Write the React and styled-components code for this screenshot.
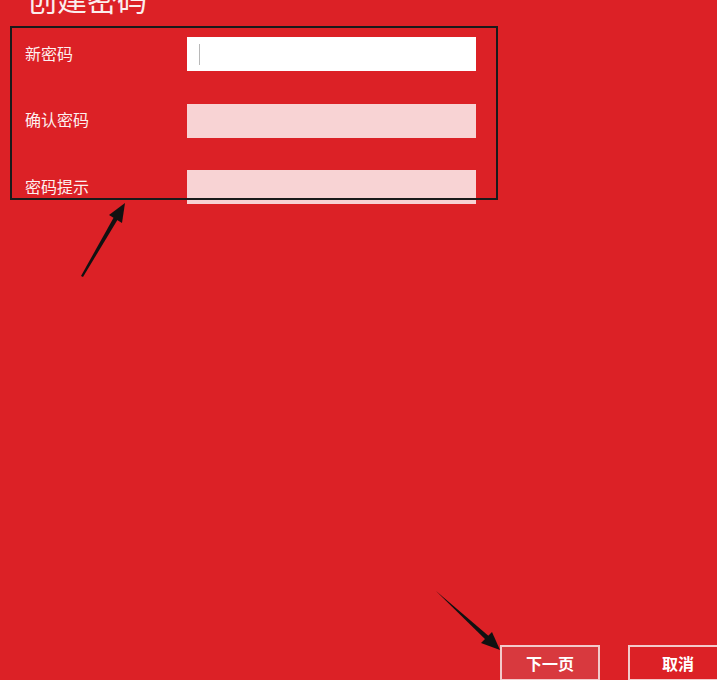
import React from "react";
import styled, { createGlobalStyle } from "styled-components";

const GlobalStyle = createGlobalStyle`
  html, body {
    margin: 0;
    padding: 0;
    background-color: #dc2126;
    overflow: hidden;
  }
  body {
    font-family: "Noto Sans CJK SC", "Noto Sans", sans-serif;
  }
`;

const Page = styled.div`
  position: relative;
  height: 680px;
  display: flex;
  flex-direction: column;
  background-color: #dc2126;
  color: #fff;
  overflow: hidden;
`;

const Title = styled.h1`
  margin: -17px 0 0 27px;
  font-size: 30px;
  line-height: 30px;
  font-weight: 400;
  color: #fbeeee;
`;

const Form = styled.div`
  position: relative;
  margin-top: 24px;
  display: flex;
  flex-direction: column;
  gap: 32.5px;
`;

const Row = styled.div`
  display: flex;
  align-items: center;
  height: 34px;
`;

const Label = styled.span`
  width: 162px;
  padding-left: 25px;
  padding-bottom: 3px;
  font-size: 16px;
  color: #fdf0f0;
`;

const Field = styled.div`
  position: relative;
  width: 289px;
  height: 34px;
  background-color: ${(p) => (p.$active ? "#ffffff" : "#f8d3d4")};

  &::after {
    content: "";
    display: ${(p) => (p.$active ? "block" : "none")};
    position: absolute;
    left: 12px;
    top: 7px;
    width: 1px;
    height: 21px;
    background-color: #b8b8b8;
  }
`;

// annotation frame drawn over the form
const Highlight = styled.div`
  position: absolute;
  left: 10px;
  top: -11px;
  width: 484px;
  height: 170px;
  border: 2px solid #1a1a1a;
  pointer-events: none;
`;

const Footer = styled.div`
  margin-top: auto;
  display: flex;
  gap: 28px;
  padding-left: 500px;
`;

const Button = styled.button`
  flex-shrink: 0;
  width: 100px;
  height: 36px;
  margin-bottom: -1px;
  border: 2px solid #f3caca;
  background-color: ${(p) => (p.$primary ? "#d8393e" : "#dc2126")};
  color: #fff;
  font-family: "Noto Sans CJK SC", sans-serif;
  font-size: 16px;
  font-weight: 700;
`;

const Arrows = styled.svg`
  position: absolute;
  left: 0;
  top: 0;
  width: 717px;
  height: 680px;
  pointer-events: none;
`;

const fields = [
  { label: "新密码", active: true },
  { label: "确认密码" },
  { label: "密码提示" },
];

const App = () => {
  return (
    <>
      <GlobalStyle />
      <Page>
        <Title>创建密码</Title>
        <Form>
          {fields.map((f) => (
            <Row key={f.label}>
              <Label>{f.label}</Label>
              <Field $active={f.active} />
            </Row>
          ))}
          <Highlight />
        </Form>
        <Footer>
          <Button $primary>下一页</Button>
          <Button>取消</Button>
        </Footer>
        <Arrows viewBox="0 0 717 680">
          <polygon points="81,276 83,277 118,219 114,217" fill="#111" />
          <polygon points="125,203 122,223 109,215" fill="#111" />
          <polygon points="436,591 438,593 488,642 491,638" fill="#111" />
          <polygon points="500,650 481,643 492,632" fill="#111" />
        </Arrows>
      </Page>
    </>
  );
};

export default App;
